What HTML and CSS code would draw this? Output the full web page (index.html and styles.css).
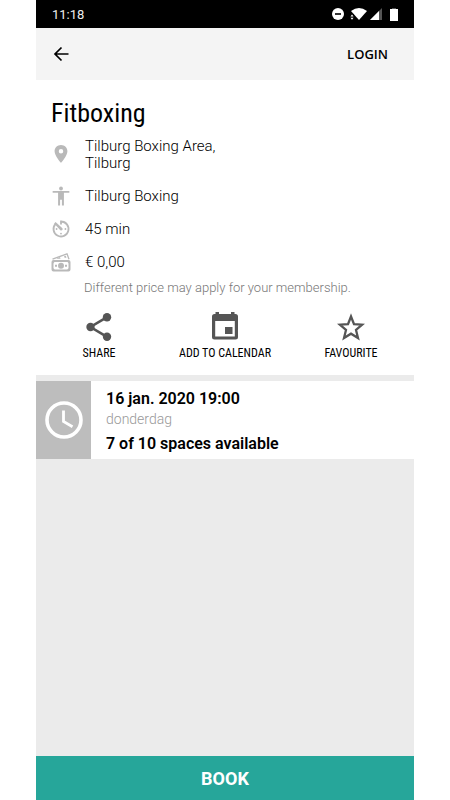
FILE: index.html
```html
<!DOCTYPE html>
<html lang="en">
<head>
<meta charset="utf-8">
<meta name="viewport" content="width=device-width, initial-scale=1">
<title>Fitboxing</title>
<link rel="stylesheet" href="styles.css">
</head>
<body>
<div class="app">
  <div class="status">
    <span>11:18</span>
    <div class="status-icons">
      <svg width="12" height="12" viewBox="0 0 12 12"><circle cx="6" cy="6" r="6" fill="#fff"/><path d="M3 6h6" stroke="#000" stroke-width="1.6"/></svg>
      <svg class="wifi" width="18" height="12" viewBox="0 0 18 12"><path d="M1 3Q9-3 17 3L9 12Z" fill="#fff"/><path d="M0 6h4v6H0z" fill="#000"/><path d="M.5 8.500 2 6.500l1.500 2zM.5 9.800 2 11.800l1.500-2z" fill="#fff"/></svg>
      <svg width="12" height="12" viewBox="0 0 12 12"><path d="M12 0v12H0z" fill="#555"/><path d="M9 3v9H0z" fill="#fff"/></svg>
      <svg class="battery" width="8" height="13" viewBox="0 0 8 13"><path d="M2 0h4v2H2z" fill="#555"/><path d="M0 1h8v12H0z" fill="#fff"/></svg>
    </div>
  </div>
  <header class="bar">
    <button class="back" type="button" aria-label="Back"><svg width="16" height="16" viewBox="0 0 16 16"><path d="M15.500 8H2M8.500 1.500 2 8l6.500 6.500" fill="none" stroke="#000" stroke-width="1.700"/></svg></button>
    <a class="login" href="#">LOGIN</a>
  </header>
  <main class="main">
    <section class="details">
      <h1 class="title">Fitboxing</h1>
      <ul class="facts">
        <li class="fact fact-place">
          <svg width="20" height="20" viewBox="0 0 24 24"><path d="M12 0C7.600 0 4.300 3.300 4.300 7.500 4.300 13 12 21.500 12 21.500S19.700 13 19.700 7.500C19.700 3.300 16.400 0 12 0zm0 10.300a2.700 2.700 0 1 1 0-5.400 2.700 2.700 0 0 1 0 5.400z"/></svg>
          <span>Tilburg Boxing Area,<br>Tilburg</span>
        </li>
        <li class="fact">
          <svg width="20" height="20" viewBox="0 0 24 24"><circle cx="12" cy="3" r="2.300"/><path d="M22 8.200h-6.500V23.500h-2.400v-7h-2.200v7H8.500V8.200H2V6h20z"/></svg>
          <span>Tilburg Boxing</span>
        </li>
        <li class="fact">
          <svg width="20" height="20" viewBox="0 0 24 24"><path d="M12 1.800v4.700M12 3a9 9 0 1 1-6.500 2.800" fill="none" stroke="#b9b9b9" stroke-width="2.200"/><path d="m3.800 5.300 1.700-1.700 8.200 7.400a1.800 1.800 0 0 1-2.500 2.500z"/><circle cx="17.300" cy="12" r="1.100"/><circle cx="12" cy="17.500" r="1.100"/><circle cx="6.700" cy="12" r="1.100"/></svg>
          <span>45 min</span>
        </li>
        <li class="fact">
          <svg width="20" height="20" viewBox="0 0 20 20"><path d="M1.500 7.200 16 1.800l2 5.400" fill="none" stroke="#b9b9b9" stroke-width="1.300"/><path d="m6 6.300 3-1.200.5 1.700H6zM13 4.300l1.700-.6.800 1.900-1.700.5z"/><rect x="1.500" y="9" width="17" height="9.500" rx="1" fill="none" stroke="#b9b9b9" stroke-width="2"/><circle cx="10" cy="13.700" r="3"/><path d="M4 12.700h2v2H4zM14 12.700h2v2h-2zM2 9h2.500L2 11.500zM18 9h-2.500l2.500 2.500zM2 18.500h2.500L2 16zM18 18.500h-2.500L18 16z"/></svg>
          <span>€ 0,00</span>
        </li>
      </ul>
      <p class="note">Different price may apply for your membership.</p>
      <div class="actions">
        <button class="action" type="button">
          <svg width="28" height="30" viewBox="0 0 28 30"><path d="M22 5.200 5.500 15 22 24.800" fill="none" stroke="#555" stroke-width="2.600"/><circle cx="22" cy="5.200" r="4.200"/><circle cx="5.500" cy="15" r="4.200"/><circle cx="22" cy="24.800" r="4.200"/></svg>
          <span>SHARE</span>
        </button>
        <button class="action" type="button">
          <svg width="28" height="30" viewBox="0 0 28 30"><path fill-rule="evenodd" d="M4.500 0h3.500v2h12V0h3.500v2h1a2.500 2.500 0 0 1 2.500 2.500V25a2.500 2.500 0 0 1-2.500 2.500h-21A2.500 2.500 0 0 1 1 25V4.500A2.500 2.500 0 0 1 3.500 2h1zM4.200 9v15.500h19.600V9zM14 15h7.500v7H14z"/></svg>
          <span>ADD TO CALENDAR</span>
        </button>
        <button class="action" type="button">
          <svg width="28" height="30" viewBox="0 0 28 30"><path d="m14 4.500 3 7.600 8.200.6-6.200 5.300 2 8-7-4.300L7 26l2-8-6.200-5.300 8.200-.6z" fill="none" stroke="#555" stroke-width="2.300"/></svg>
          <span>FAVOURITE</span>
        </button>
      </div>
    </section>
    <section class="session">
      <div class="session-icon"><svg width="38" height="38" viewBox="0 0 38 38"><circle cx="19" cy="19" r="17" fill="none" stroke="#fff" stroke-width="3.600"/><path d="M18.500 9.500v11l9 5.300" fill="none" stroke="#fff" stroke-width="2.800"/></svg></div>
      <div class="session-text">
        <strong>16 jan. 2020 19:00</strong>
        <span class="day">donderdag</span>
        <strong class="spaces">7 of 10 spaces available</strong>
      </div>
    </section>
  </main>
  <button class="book" type="button">BOOK</button>
</div>
</body>
</html>
```
FILE: styles.css
```css
* { box-sizing: border-box; }
body {
  margin: 0;
  padding: 0 8%;
  background: #fff;
  color: #000;
  font-family: Roboto, sans-serif;
  font-size: 15px;
}
button {
  margin: 0;
  padding: 0;
  border: 0;
  background: none;
  color: inherit;
  font: inherit;
  cursor: pointer;
}
svg { display: block; flex: none; }
.app { display: flex; flex-direction: column; min-height: 100vh; }
.status {
  display: flex;
  align-items: center;
  justify-content: space-between;
  height: 28px;
  padding: 0 16px;
  background: #000;
  color: #eee;
  font-size: 13px;
}
.status-icons { display: flex; align-items: center; gap: 6px; }
.status-icons .wifi { margin-right: -4px; }
.battery { margin-left: 2px; }
.bar {
  display: flex;
  align-items: center;
  justify-content: space-between;
  height: 52px;
  padding: 0 26px 0 17px;
  background: #f4f4f4;
}
.login {
  color: #000;
  font: 600 13px "Open Sans", sans-serif;
  text-decoration: none;
}
.main { flex: 1; background: #ebebeb; }
.details { padding: 16px 15px 14px; background: #fff; }
.title {
  margin: 0;
  font: 400 26px/34px "Roboto Condensed", Roboto, sans-serif;
}
.facts {
  display: flex;
  flex-direction: column;
  gap: 13px;
  margin: 8px 0 0;
  padding: 0;
  list-style: none;
}
.fact {
  display: flex;
  align-items: center;
  gap: 14px;
  font-weight: 300;
  line-height: 17px;
}
.fact svg { fill: #b9b9b9; }
.fact-place { padding-bottom: 1px; }
.note {
  margin: 8px 0 0 33px;
  color: #777;
  font-size: 13px;
  font-weight: 300;
  line-height: 16px;
}
.actions {
  display: grid;
  grid-template-columns: repeat(3, 1fr);
  margin: 16px -15px 0;
}
.action {
  display: flex;
  flex-direction: column;
  align-items: center;
  gap: 3px;
  font: 400 12px/16px "Roboto Condensed", Roboto, sans-serif;
}
.action svg { fill: #555; }
.session {
  display: flex;
  margin-top: 6px;
  background: #fff;
}
.session-icon {
  display: flex;
  align-items: center;
  justify-content: center;
  width: 55px;
  background: #bdbdbd;
}
.session-text {
  display: flex;
  flex-direction: column;
  padding: 8px 15px 5px;
  line-height: 20px;
}
.session-text strong { font-size: 16px; font-weight: 600; }
.day { color: #999; font-size: 14px; font-weight: 300; }
.spaces { margin-top: 5px; }
.book {
  height: 44px;
  background: #26a69a;
  color: #fff;
  font: 700 18px Roboto, sans-serif;
}
```
